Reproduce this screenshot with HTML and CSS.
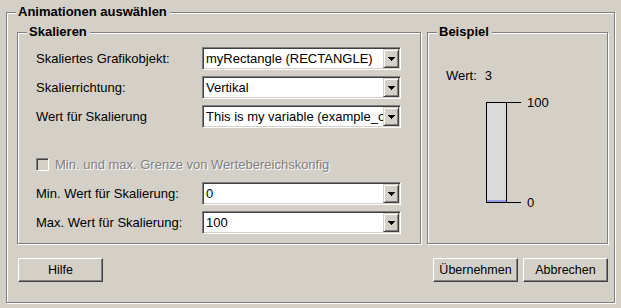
FILE: index.html
```html
<!DOCTYPE html>
<html lang="de">
<head>
<meta charset="utf-8">
<title>Animationen auswählen</title>
<link rel="stylesheet" href="styles.css">
</head>
<body>
<div class="group outer">
  <div class="legend">Animationen auswählen</div>
  <div class="columns">
    <div class="group scale">
      <div class="legend">Skalieren</div>
      <div class="form">
        <div class="row">
          <span class="label">Skaliertes Grafikobjekt:</span>
          <div class="combo"><span class="value">myRectangle (RECTANGLE)</span><span class="drop"><svg width="7" height="4" viewBox="0 0 7 4" shape-rendering="crispEdges"><path d="M0 0h7v1H0zM1 1h5v1H1zM2 2h3v1H2zM3 3h1v1H3z" fill="#000"/></svg></span></div>
        </div>
        <div class="row">
          <span class="label">Skalierrichtung:</span>
          <div class="combo"><span class="value">Vertikal</span><span class="drop"><svg width="7" height="4" viewBox="0 0 7 4" shape-rendering="crispEdges"><path d="M0 0h7v1H0zM1 1h5v1H1zM2 2h3v1H2zM3 3h1v1H3z" fill="#000"/></svg></span></div>
        </div>
        <div class="row">
          <span class="label">Wert für Skalierung</span>
          <div class="combo"><span class="value">This is my variable (example_obj)</span><span class="drop"><svg width="7" height="4" viewBox="0 0 7 4" shape-rendering="crispEdges"><path d="M0 0h7v1H0zM1 1h5v1H1zM2 2h3v1H2zM3 3h1v1H3z" fill="#000"/></svg></span></div>
        </div>
        <div class="check-row">
          <span class="checkbox"></span>
          <span class="disabled">Min. und max. Grenze von Wertebereichskonfig</span>
        </div>
        <div class="row">
          <span class="label">Min. Wert für Skalierung:</span>
          <div class="combo"><span class="value">0</span><span class="drop"><svg width="7" height="4" viewBox="0 0 7 4" shape-rendering="crispEdges"><path d="M0 0h7v1H0zM1 1h5v1H1zM2 2h3v1H2zM3 3h1v1H3z" fill="#000"/></svg></span></div>
        </div>
        <div class="row">
          <span class="label">Max. Wert für Skalierung:</span>
          <div class="combo"><span class="value">100</span><span class="drop"><svg width="7" height="4" viewBox="0 0 7 4" shape-rendering="crispEdges"><path d="M0 0h7v1H0zM1 1h5v1H1zM2 2h3v1H2zM3 3h1v1H3z" fill="#000"/></svg></span></div>
        </div>
      </div>
    </div>
    <div class="group example">
      <div class="legend">Beispiel</div>
      <div class="wert"><span>Wert:</span><span>3</span></div>
      <div class="gauge">
        <div class="bar"><div class="fill" style="height:2px"></div></div>
        <div class="ticks">
          <div class="tick"><span class="line"></span><span class="tick-label">100</span></div>
          <div class="tick"><span class="line"></span><span class="tick-label">0</span></div>
        </div>
      </div>
    </div>
  </div>
  <div class="buttons">
    <button class="btn">Hilfe</button>
    <span class="spacer"></span>
    <button class="btn">Übernehmen</button>
    <button class="btn">Abbrechen</button>
  </div>
</div>
</body>
</html>
```
FILE: styles.css
```css
* { box-sizing: border-box; }

body {
  margin: 0;
  width: 621px;
  height: 308px;
  overflow: hidden;
  background: #d4d0c8;
  color: #000;
  font-family: "Liberation Sans", Arial, sans-serif;
  font-size: 13px;
}

.group {
  position: relative;
  border: 1px solid #808080;
  box-shadow: 1px 1px 0 #fff, inset 1px 1px 0 #fff;
}

.legend {
  position: absolute;
  top: -9px;
  left: 9px;
  padding: 0 3px 0 2px;
  background: #d4d0c8;
  font-weight: bold;
  line-height: 16px;
  white-space: nowrap;
}

.outer {
  margin: 12px 0 0 6px;
  width: 609px;
  height: 291px;
  padding: 19px 5px 20px 10px;
  display: flex;
  flex-direction: column;
}

.columns {
  display: flex;
  gap: 6px;
  height: 212px;
}

.scale {
  width: 404px;
  padding: 14px 0 0 18px;
}

.example {
  width: 181px;
  padding: 35px 0 0 18px;
}

.form {
  display: flex;
  flex-direction: column;
  gap: 6px;
}

.row {
  display: flex;
  align-items: center;
  height: 23px;
}

.label {
  width: 166px;
  white-space: nowrap;
}

.combo {
  width: 199px;
  height: 23px;
  display: flex;
  padding: 1px;
  background: #fff;
  border: 1px solid;
  border-color: #808080 #fff #fff #808080;
  box-shadow: inset 1px 1px 0 #404040, inset -1px -1px 0 #d4d0c8;
}

.value {
  flex: 1;
  min-width: 0;
  padding-left: 2px;
  overflow: hidden;
  white-space: nowrap;
  line-height: 19px;
}

.drop {
  width: 16px;
  flex: none;
  display: flex;
  align-items: center;
  justify-content: center;
  background: #d4d0c8;
  border: 1px solid;
  border-color: #d4d0c8 #404040 #404040 #d4d0c8;
  box-shadow: inset 1px 1px 0 #fff, inset -1px -1px 0 #808080;
}

.drop svg { display: block; }

.check-row {
  display: flex;
  align-items: center;
  height: 16px;
  margin: 22px 0 4px;
  gap: 6px;
}

.checkbox {
  width: 13px;
  height: 13px;
  background: #d4d0c8;
  border: 1px solid;
  border-color: #808080 #fff #fff #808080;
  box-shadow: inset 1px 1px 0 #404040, inset -1px -1px 0 #d4d0c8;
}

.disabled {
  color: #808080;
  text-shadow: 1px 1px 0 #fff;
  white-space: nowrap;
}

.wert {
  display: flex;
  gap: 8px;
  line-height: 16px;
}

.gauge {
  display: flex;
  margin: 18px 0 0 40px;
}

.bar {
  width: 21px;
  height: 101px;
  border: 1px solid #000;
  background: #dadada;
  display: flex;
  align-items: flex-end;
}

.fill {
  width: 100%;
  background: #9a9ae6;
}

.ticks {
  height: 101px;
  display: flex;
  flex-direction: column;
  justify-content: space-between;
}

.tick {
  height: 1px;
  display: flex;
  align-items: center;
  gap: 6px;
}

.line {
  width: 14px;
  height: 1px;
  background: #000;
}

.tick-label {
  line-height: 16px;
}

.buttons {
  display: flex;
  margin-top: 14px;
  padding: 0 1px 0 1px;
  height: 24px;
  gap: 5px;
}

.spacer { flex: 1; }

.btn {
  width: 85px;
  height: 24px;
  padding: 0;
  background: #d4d0c8;
  color: #000;
  font-family: "Liberation Sans", Arial, sans-serif;
  font-size: 12.5px;
  border: 1px solid;
  border-color: #fff #404040 #404040 #fff;
  box-shadow: inset -1px -1px 0 #808080;
  border-radius: 0;
}
```
